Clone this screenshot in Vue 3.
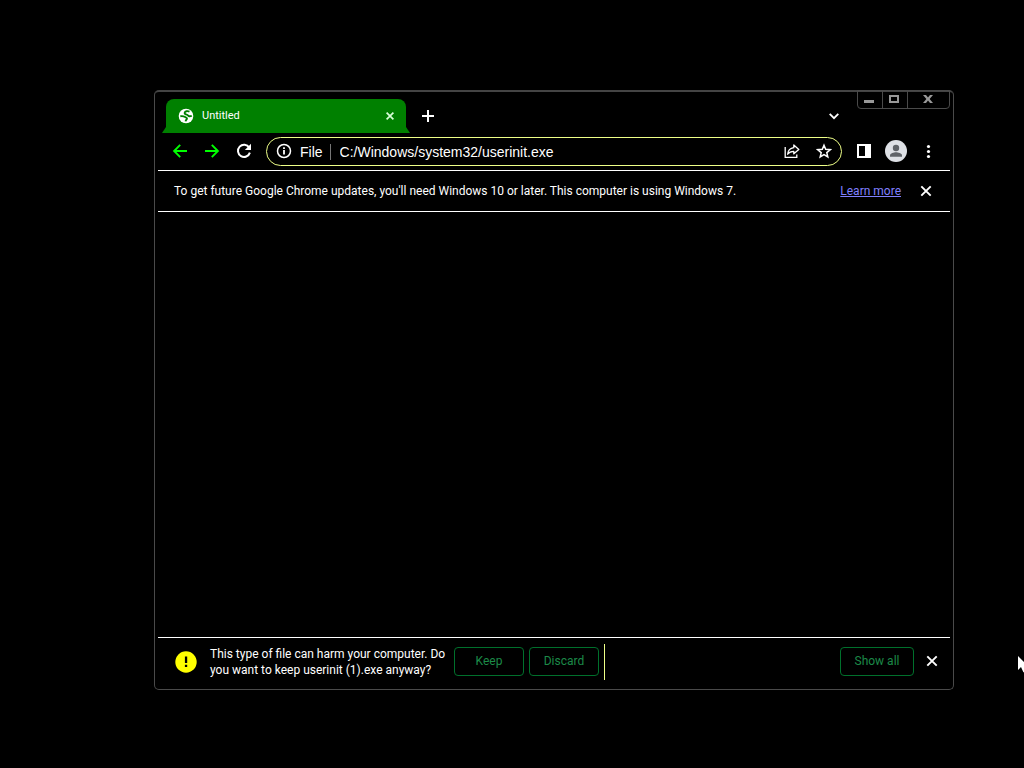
<script setup>
import { ref } from 'vue'

const tabTitle = 'Untitled'
const address = ref('C:/Windows/system32/userinit.exe')
const showInfobar = ref(true)
const showShelf = ref(true)
</script>

<template>
  <div class="desktop">
    <main class="window">
      <div class="caption">
        <button class="caption-btn" aria-label="Minimize">
          <svg width="10" height="10" viewBox="0 0 10 10"><path d="M0 6h10v3H0z" fill="#999" /></svg>
        </button>
        <button class="caption-btn" aria-label="Maximize">
          <svg width="10" height="10" viewBox="0 0 10 10"><path d="M1 2h8v6H1z" fill="none" stroke="#999" stroke-width="2" /></svg>
        </button>
        <button class="caption-btn caption-close" aria-label="Close">
          <svg width="10" height="10" viewBox="0 0 10 10"><path d="M0 1h3l2 2.500L7 1h3L6.600 5 10 9H7L5 6.500 3 9H0l3.400-4z" fill="#999" /></svg>
        </button>
      </div>

      <div class="tabstrip">
        <div class="tab">
          <svg width="16" height="16" viewBox="0 0 16 16">
            <circle cx="8" cy="8" r="7.300" fill="#fff" />
            <path d="M11.500 3.600C9.500 2.700 7 3.300 6.700 4.600c-.3 1.200.8 1.800 2 2 1.300.2 1.600 1.500 2.600 1.700 1 .1 1.800-.2 2.500-.6M2.300 8.300c1.700-.3 3.200-.2 4.300.5 1 .7 2.600.6 2.400 1.800-.2 1-1.200 1-1.400 2.700" fill="none" stroke="#008000" stroke-width="1.900" />
          </svg>
          <span class="tab-title">{{ tabTitle }}</span>
          <button class="icon-btn" aria-label="Close tab">
            <svg width="8" height="8" viewBox="0 0 8 8"><path d="M.6.6l6.800 6.800M7.400.6L.6 7.400" stroke="#d8ffd8" stroke-width="1.700" /></svg>
          </button>
        </div>
        <button class="icon-btn new-tab" aria-label="New tab">
          <svg width="12" height="12" viewBox="0 0 12 12"><path d="M6 0v12M0 6h12" stroke="#fff" stroke-width="2" /></svg>
        </button>
        <button class="icon-btn tab-search" aria-label="Search tabs">
          <svg width="10" height="7" viewBox="0 0 10 7"><path d="M.7.9L5 5.200 9.300.9" fill="none" stroke="#fff" stroke-width="1.800" /></svg>
        </button>
      </div>

      <div class="toolbar">
        <button class="icon-btn" aria-label="Back">
          <svg width="16" height="16" viewBox="0 0 16 16"><path d="M15 8H2.500M8.200 1.900L2.100 8l6.100 6.100" fill="none" stroke="#0f0" stroke-width="1.900" /></svg>
        </button>
        <button class="icon-btn" aria-label="Forward">
          <svg width="16" height="16" viewBox="0 0 16 16"><path d="M1 8h12.500M7.800 1.900L13.900 8l-6.100 6.100" fill="none" stroke="#0f0" stroke-width="1.900" /></svg>
        </button>
        <button class="icon-btn" aria-label="Reload">
          <svg width="16" height="16" viewBox="0 0 16 16">
            <path d="M13.200 4.500A6.100 6.100 0 1 0 13.900 9.600" fill="none" stroke="#fff" stroke-width="2" />
            <path d="M15 .8v6.200H8.800z" fill="#fff" />
          </svg>
        </button>
        <div class="omnibox">
          <svg class="info" width="16" height="16" viewBox="0 0 16 16">
            <circle cx="8" cy="8" r="6.500" fill="none" stroke="#fff" stroke-width="1.500" />
            <path d="M7.100 7h1.800v4.500H7.100zM7.100 4.300h1.800v1.700H7.100z" fill="#fff" />
          </svg>
          <label class="scheme" for="address">File</label>
          <input id="address" v-model="address" class="address" type="text" spellcheck="false" />
          <button class="icon-btn" aria-label="Share">
            <svg width="16" height="16" viewBox="0 0 16 16" fill="none" stroke="#fff" stroke-width="1.300">
              <path d="M1.200 4v10.400h11.600v-3" />
              <path d="M9.800 2l5 4.500-5 4.300V8.300c-2.800 0-4.800.9-6.200 2.900.4-3.600 2.500-6 6.200-6.500z" stroke-linejoin="round" />
            </svg>
          </button>
          <button class="icon-btn" aria-label="Bookmark">
            <svg width="16" height="16" viewBox="0 0 16 16"><path d="M8 2.200l1.700 4.100 4.500.4-3.400 2.900 1 4.400L8 11.700 4.200 14l1-4.400-3.400-2.900 4.500-.4z" fill="none" stroke="#fff" stroke-width="1.500" /></svg>
          </button>
        </div>
        <button class="icon-btn" aria-label="Side panel">
          <svg width="16" height="16" viewBox="0 0 16 16"><path d="M1 1h14v14H1zM3 3v10h6V3z" fill="#fff" fill-rule="evenodd" /></svg>
        </button>
        <button class="icon-btn" aria-label="Profile">
          <svg width="22" height="22" viewBox="0 0 22 22">
            <circle cx="11" cy="11" r="11" fill="#dee1e6" />
            <circle cx="11" cy="8" r="3.200" fill="#5f6368" />
            <path d="M5 16.700v-1.500c0-2 4-3 6-3s6 1 6 3v1.500z" fill="#5f6368" />
          </svg>
        </button>
        <button class="icon-btn" aria-label="Menu">
          <svg width="16" height="16" viewBox="0 0 16 16" fill="#fff"><circle cx="8.500" cy="3.500" r="1.600" /><circle cx="8.500" cy="8.500" r="1.600" /><circle cx="8.500" cy="13.500" r="1.600" /></svg>
        </button>
      </div>

      <div v-if="showInfobar" class="infobar">
        <span class="infobar-text">To get future Google Chrome updates, you'll need Windows 10 or later. This computer is using Windows 7.</span>
        <a class="learn-more" href="#">Learn more</a>
        <button class="icon-btn" aria-label="Dismiss" @click="showInfobar = false">
          <svg width="12" height="12" viewBox="0 0 12 12"><path d="M1.300 1.300l9.400 9.400M10.700 1.300l-9.400 9.400" stroke="#fff" stroke-width="1.900" /></svg>
        </button>
      </div>

      <div class="page"></div>

      <div v-if="showShelf" class="shelf">
        <svg width="22" height="22" viewBox="0 0 22 22">
          <circle cx="11" cy="11" r="10.700" fill="#ff0" />
          <path d="M9.900 5.500h2.300V12H9.900zM9.900 13.800h2.300V16H9.900z" fill="#000" />
        </svg>
        <p class="shelf-text">This type of file can harm your computer. Do you want to keep userinit (1).exe anyway?</p>
        <button class="shelf-btn">Keep</button>
        <button class="shelf-btn">Discard</button>
        <span class="separator"></span>
        <button class="shelf-btn show-all">Show all</button>
        <button class="icon-btn" aria-label="Close downloads bar" @click="showShelf = false">
          <svg width="12" height="12" viewBox="0 0 12 12"><path d="M1.300 1.300l9.400 9.400M10.700 1.300l-9.400 9.400" stroke="#fff" stroke-width="1.900" /></svg>
        </button>
      </div>
    </main>

    <svg class="cursor" width="6" height="17" viewBox="0 0 6 17"><path d="M0 0v14l3-3 2.500 5.500L6 16V6z" fill="#fff" /></svg>
  </div>
</template>

<style>
body {
  margin: 0;
  background: #000;
}
</style>

<style scoped>
.desktop {
  position: relative;
  display: flex;
  box-sizing: border-box;
  min-height: 100vh;
  padding: 90px 70px 78px 154px;
  overflow: hidden;
  background: #000;
  color: #fff;
  font-family: Roboto, 'Liberation Sans', sans-serif;
  font-size: 12px;
  line-height: 16px;
}

.window {
  position: relative;
  display: flex;
  flex: 1;
  flex-direction: column;
  min-width: 0;
  padding: 0 3px 3px;
  border: 1px solid #4a4a4a;
  border-top: 2px solid #444;
  border-radius: 5px;
}

button {
  padding: 0;
  border: 0;
  background: none;
  color: inherit;
  font: inherit;
}

svg {
  display: block;
  flex: none;
}

.caption {
  position: absolute;
  top: -2px;
  right: 3px;
  display: flex;
  border: 1px solid #4a4a4a;
  border-radius: 0 0 4px 4px;
}

.caption-btn {
  display: flex;
  align-items: center;
  justify-content: center;
  box-sizing: border-box;
  width: 25px;
  height: 17px;
  padding: 0 2px 2px 0;
  border-right: 1px solid #4a4a4a;
}

.caption-close {
  width: 41px;
  border-right: 0;
}

.icon-btn {
  display: flex;
  flex: none;
  align-items: center;
  justify-content: center;
  width: 16px;
  height: 16px;
}

.tabstrip {
  display: flex;
  align-items: center;
  height: 34px;
  padding: 7px 108px 0 8px;
}

.tab {
  position: relative;
  display: flex;
  align-items: center;
  gap: 8px;
  box-sizing: border-box;
  width: 240px;
  height: 34px;
  padding: 0 8px 0 12px;
  border-radius: 8px 8px 0 0;
  background: #008000;
}

.tab::before,
.tab::after {
  content: '';
  position: absolute;
  bottom: 0;
  width: 4px;
  height: 6px;
  background: #008000;
}

.tab::before {
  left: -4px;
  clip-path: polygon(100% 0, 100% 100%, 0 100%);
}

.tab::after {
  right: -4px;
  clip-path: polygon(0 0, 100% 100%, 0 100%);
}

.tab-title {
  flex: 1;
  font-size: 11px;
  line-height: 18px;
}

.new-tab {
  margin-left: 14px;
}

.tab-search {
  margin-left: auto;
}

.toolbar {
  display: flex;
  align-items: flex-start;
  gap: 16px;
  height: 33px;
  padding: 4px 14px 0;
  border-bottom: 1px solid #fff;
}

.toolbar > .icon-btn {
  height: 28px;
}

.omnibox {
  display: flex;
  flex: 1;
  align-items: center;
  box-sizing: border-box;
  min-width: 0;
  height: 29px;
  margin: 0 -2px;
  padding: 0 9px;
  border: 1px solid #eeff88;
  border-radius: 15px;
  font-family: 'Liberation Sans', Arial, sans-serif;
  font-size: 14px;
}

.info,
.omnibox .icon-btn {
  margin-bottom: 1px;
}

.scheme {
  margin-left: 8px;
  padding-right: 7px;
  border-right: 1px solid #777;
}

.address {
  flex: 1;
  min-width: 0;
  padding: 0 0 0 9px;
  border: 0;
  outline: 0;
  background: none;
  color: inherit;
  font: inherit;
}

.omnibox .icon-btn + .icon-btn {
  margin-left: 16px;
}

.infobar {
  display: flex;
  align-items: center;
  height: 40px;
  padding: 0 16px;
  border-bottom: 1px solid #fff;
}

.infobar-text {
  flex: 1;
}

.learn-more {
  margin-right: 17px;
  color: #8080ff;
}

.page {
  flex: 1;
}

.shelf {
  display: flex;
  align-items: center;
  height: 48px;
  padding: 0 10px 0 17px;
  border-top: 1px solid #fff;
}

.shelf-text {
  width: 240px;
  margin: 0 4px 0 13px;
}

.shelf-btn {
  box-sizing: border-box;
  width: 70px;
  height: 29px;
  margin-right: 5px;
  margin-bottom: 2px;
  border: 1px solid #00702c;
  border-radius: 4px;
  color: #1c8a48;
}

.shelf > .icon-btn {
  margin-bottom: 2px;
}

.separator {
  width: 1px;
  height: 36px;
  background: #eeff88;
}

.show-all {
  width: 74px;
  margin-right: 10px;
  margin-left: auto;
}

.cursor {
  position: absolute;
  top: 656px;
  right: 0;
}
</style>
